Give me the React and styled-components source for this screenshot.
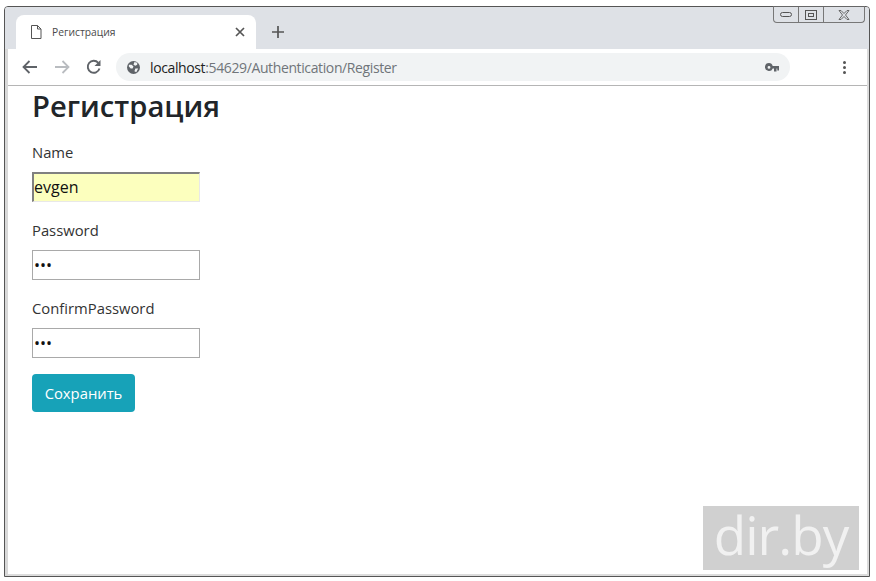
import React from 'react';
import styled, { createGlobalStyle } from 'styled-components';

const GlobalStyle = createGlobalStyle`
  html, body {
    margin: 0;
    padding: 0;
    background: #fff;
    overflow: hidden;
  }
  * { box-sizing: border-box; }
`;

const Window = styled.div`
  position: relative;
  width: 866px;
  height: 571px;
  margin: 6px 0 0 4px;
  display: flex;
  flex-direction: column;
  border: 1px solid #555;
  border-radius: 4px 4px 0 0;
  box-shadow: inset 3px 0 0 #d8d8d8, inset -2px 0 0 #dcdcdc, inset 0 -2px 0 #dcdcdc;
  background: #fff;
  padding: 0 2px 2px 3px;
`;

const TabStrip = styled.div`
  height: 42px;
  flex: none;
  background: #dee1e6;
  display: flex;
  align-items: flex-end;
  padding-left: 11px;
  margin: 0 -2px 0 -3px;
  border-radius: 3px 3px 0 0;
`;

const Tab = styled.div`
  width: 240px;
  height: 34px;
  background: #fff;
  border-radius: 8px 8px 0 0;
  display: flex;
  align-items: center;
  padding: 0 11px 0 14px;
  font: 10.3px "Open Sans", sans-serif;
  color: #4a4a4a;
`;

const TabTitle = styled.span`
  margin-left: 10px;
  flex: 1;
`;

const NewTab = styled.div`
  margin: 0 0 8px 16px;
  height: 18px;
  display: flex;
  align-items: center;
`;

const WindowControls = styled.div`
  position: absolute;
  top: -1px;
  right: 4px;
  width: 92px;
  height: 17px;
  display: grid;
  grid-template-columns: 25px 25px 1fr;
  border: 1px solid #777;
  border-top-color: #666;
  border-radius: 0 0 4px 4px;
  background: #dee1e6;
`;

const ControlCell = styled.div`
  display: flex;
  align-items: center;
  justify-content: center;
  border-right: ${p => (p.$last ? 'none' : '1px solid #777')};
`;

const Toolbar = styled.div`
  height: 37px;
  flex: none;
  display: flex;
  align-items: center;
  border-bottom: 1px solid #b5b5b5;
  padding: 0 0 0 14px;
`;

const NavIcons = styled.div`
  display: flex;
  align-items: center;
  gap: 16px;
`;

const Omnibox = styled.div`
  width: 674px;
  height: 28px;
  margin-left: 14px;
  border-radius: 14px;
  background: #f1f3f4;
  display: flex;
  align-items: center;
  padding: 0 11px;
  font: 14px "Open Sans", sans-serif;
  letter-spacing: -0.38px;
`;

const Host = styled.span`
  margin-left: 10px;
  color: #222;
`;

const UrlPath = styled.span`
  color: #70757a;
  flex: 1;
`;

const Menu = styled.div`
  margin-left: 53px;
  display: flex;
  flex-direction: column;
  gap: 2px;
`;

const MenuDot = styled.i`
  width: 3px;
  height: 3px;
  border-radius: 50%;
  background: #555;
`;

const Page = styled.main`
  flex: 1;
  padding: 0 0 0 24px;
  font-family: "Open Sans", "Noto Sans", sans-serif;
  color: #212529;
`;

const Title = styled.h1`
  margin: 1px 0 15px;
  font-size: 29.2px;
  line-height: 38px;
  font-weight: 600;
`;

const Field = styled.div`
  & + & {
    margin-top: 16px;
  }
`;

const Label = styled.label`
  display: block;
  font-size: 14.8px;
  line-height: 24px;
  margin-bottom: 8px;
  color: #333;
`;

const Input = styled.input`
  display: block;
  width: 168px;
  height: 30px;
  padding: 0 1px 1px;
  font: 16px "Open Sans", sans-serif;
  color: #111;
  outline: none;
  border-radius: 0;
  background: ${p => (p.$autofilled ? '#fcffbe' : '#fff')};
  border: 1px solid #a9a9a9;
  ${p => p.$autofilled && `
    border-width: 2px 1px 1px 2px;
    border-color: #808080 #e8e8e8 #e8e8e8 #808080;
    padding: 0 0 2px;
  `}
`;

const SaveButton = styled.button`
  display: block;
  height: 38px;
  width: 103px;
  margin-top: 16px;
  border: none;
  border-radius: 4px;
  background: #17a2b8;
  color: #fff;
  font: 14.8px "Open Sans", sans-serif;
`;

const Watermark = styled.div`
  position: absolute;
  right: 10px;
  bottom: 6px;
  width: 156px;
  height: 64px;
  background: #d0d0d0;
  color: #f1f1f1;
  font: 400 53px/58px "Open Sans", sans-serif;
  letter-spacing: -1px;
  text-align: center;
`;

const App = () => (
  <>
    <GlobalStyle />
    <Window>
      <TabStrip>
        <Tab>
          <svg width="12" height="14" viewBox="0 0 12 14" fill="none" stroke="#555" strokeWidth="1">
            <path d="M1.5 .5h6l3.5 3.5v9.500h-9.500zM7.500 .5v3.500h3.500" />
          </svg>
          <TabTitle>Регистрация</TabTitle>
          <svg width="10" height="10" viewBox="0 0 10 10" stroke="#555" strokeWidth="1.700">
            <path d="M1 1l8 8M9 1l-8 8" />
          </svg>
        </Tab>
        <NewTab>
          <svg width="12" height="12" viewBox="0 0 12 12" stroke="#555" strokeWidth="1.700">
            <path d="M6 0v12M0 6h12" />
          </svg>
        </NewTab>
      </TabStrip>
      <WindowControls>
        <ControlCell>
          <svg width="12" height="6" viewBox="0 0 12 6" fill="none" stroke="#555">
            <rect x=".5" y=".5" width="11" height="4" rx="2" />
          </svg>
        </ControlCell>
        <ControlCell>
          <svg width="12" height="10" viewBox="0 0 12 10" fill="none" stroke="#555">
            <rect x=".5" y=".5" width="11" height="9" />
            <rect x="3.500" y="3.500" width="5" height="3" />
          </svg>
        </ControlCell>
        <ControlCell $last>
          <svg width="12" height="10" viewBox="0 0 12 10" fill="none" stroke="#666">
            <path d="M1 .5h2l3 3 3-3h2l-3.500 4.500 3.500 4.500h-2l-3-3-3 3h-2l3.500-4.500z" />
          </svg>
        </ControlCell>
      </WindowControls>
      <Toolbar>
        <NavIcons>
          <svg width="16" height="14" viewBox="0 0 16 14" fill="none" stroke="#5f6368" strokeWidth="1.800">
            <path d="M15 7H2M7.500 1L1.500 7l6 6" />
          </svg>
          <svg width="16" height="14" viewBox="0 0 16 14" fill="none" stroke="#b9bcc0" strokeWidth="1.800">
            <path d="M1 7h13M8.500 1l6 6-6 6" />
          </svg>
          <svg width="16" height="16" viewBox="0 0 16 16" fill="none" stroke="#5f6368" strokeWidth="1.900">
            <path d="M13.500 9.500A6 6 0 1 1 12.300 3.800" />
            <path d="M14.500 1v6h-6z" fill="#5f6368" stroke="none" />
          </svg>
        </NavIcons>
        <Omnibox>
          <svg width="13" height="13" viewBox="0 0 14 14">
            <circle cx="7" cy="7" r="7" fill="#5f6368" />
            <path d="M2 4l3 0 2 2-1 2-2 0-2-2zM8 1l3 1 0 2-2 1-2-1zM9 8l3 0-2 4-2-1z" fill="#f1f3f4" />
          </svg>
          <Host>localhost</Host>
          <UrlPath>:54629/Authentication/Register</UrlPath>
          <svg width="14" height="9" viewBox="0 0 14 9" fill="#5f6368">
            <path d="M4 0a4 4 0 1 0 3.700 5.500H9V8.500h2.500V5.500h.8V7.500H14V3H7.700A4 4 0 0 0 4 0zm0 3a1.400 1.400 0 1 1 0 2.800A1.400 1.400 0 0 1 4 3z" />
          </svg>
        </Omnibox>
        <Menu>
          <MenuDot />
          <MenuDot />
          <MenuDot />
        </Menu>
      </Toolbar>
      <Page>
        <Title>Регистрация</Title>
        <Field>
          <Label>Name</Label>
          <Input $autofilled defaultValue="evgen" />
        </Field>
        <Field>
          <Label>Password</Label>
          <Input type="password" defaultValue="123" />
        </Field>
        <Field>
          <Label>ConfirmPassword</Label>
          <Input type="password" defaultValue="123" />
        </Field>
        <SaveButton>Сохранить</SaveButton>
      </Page>
      <Watermark>dir.by</Watermark>
    </Window>
  </>
);

export default App;
